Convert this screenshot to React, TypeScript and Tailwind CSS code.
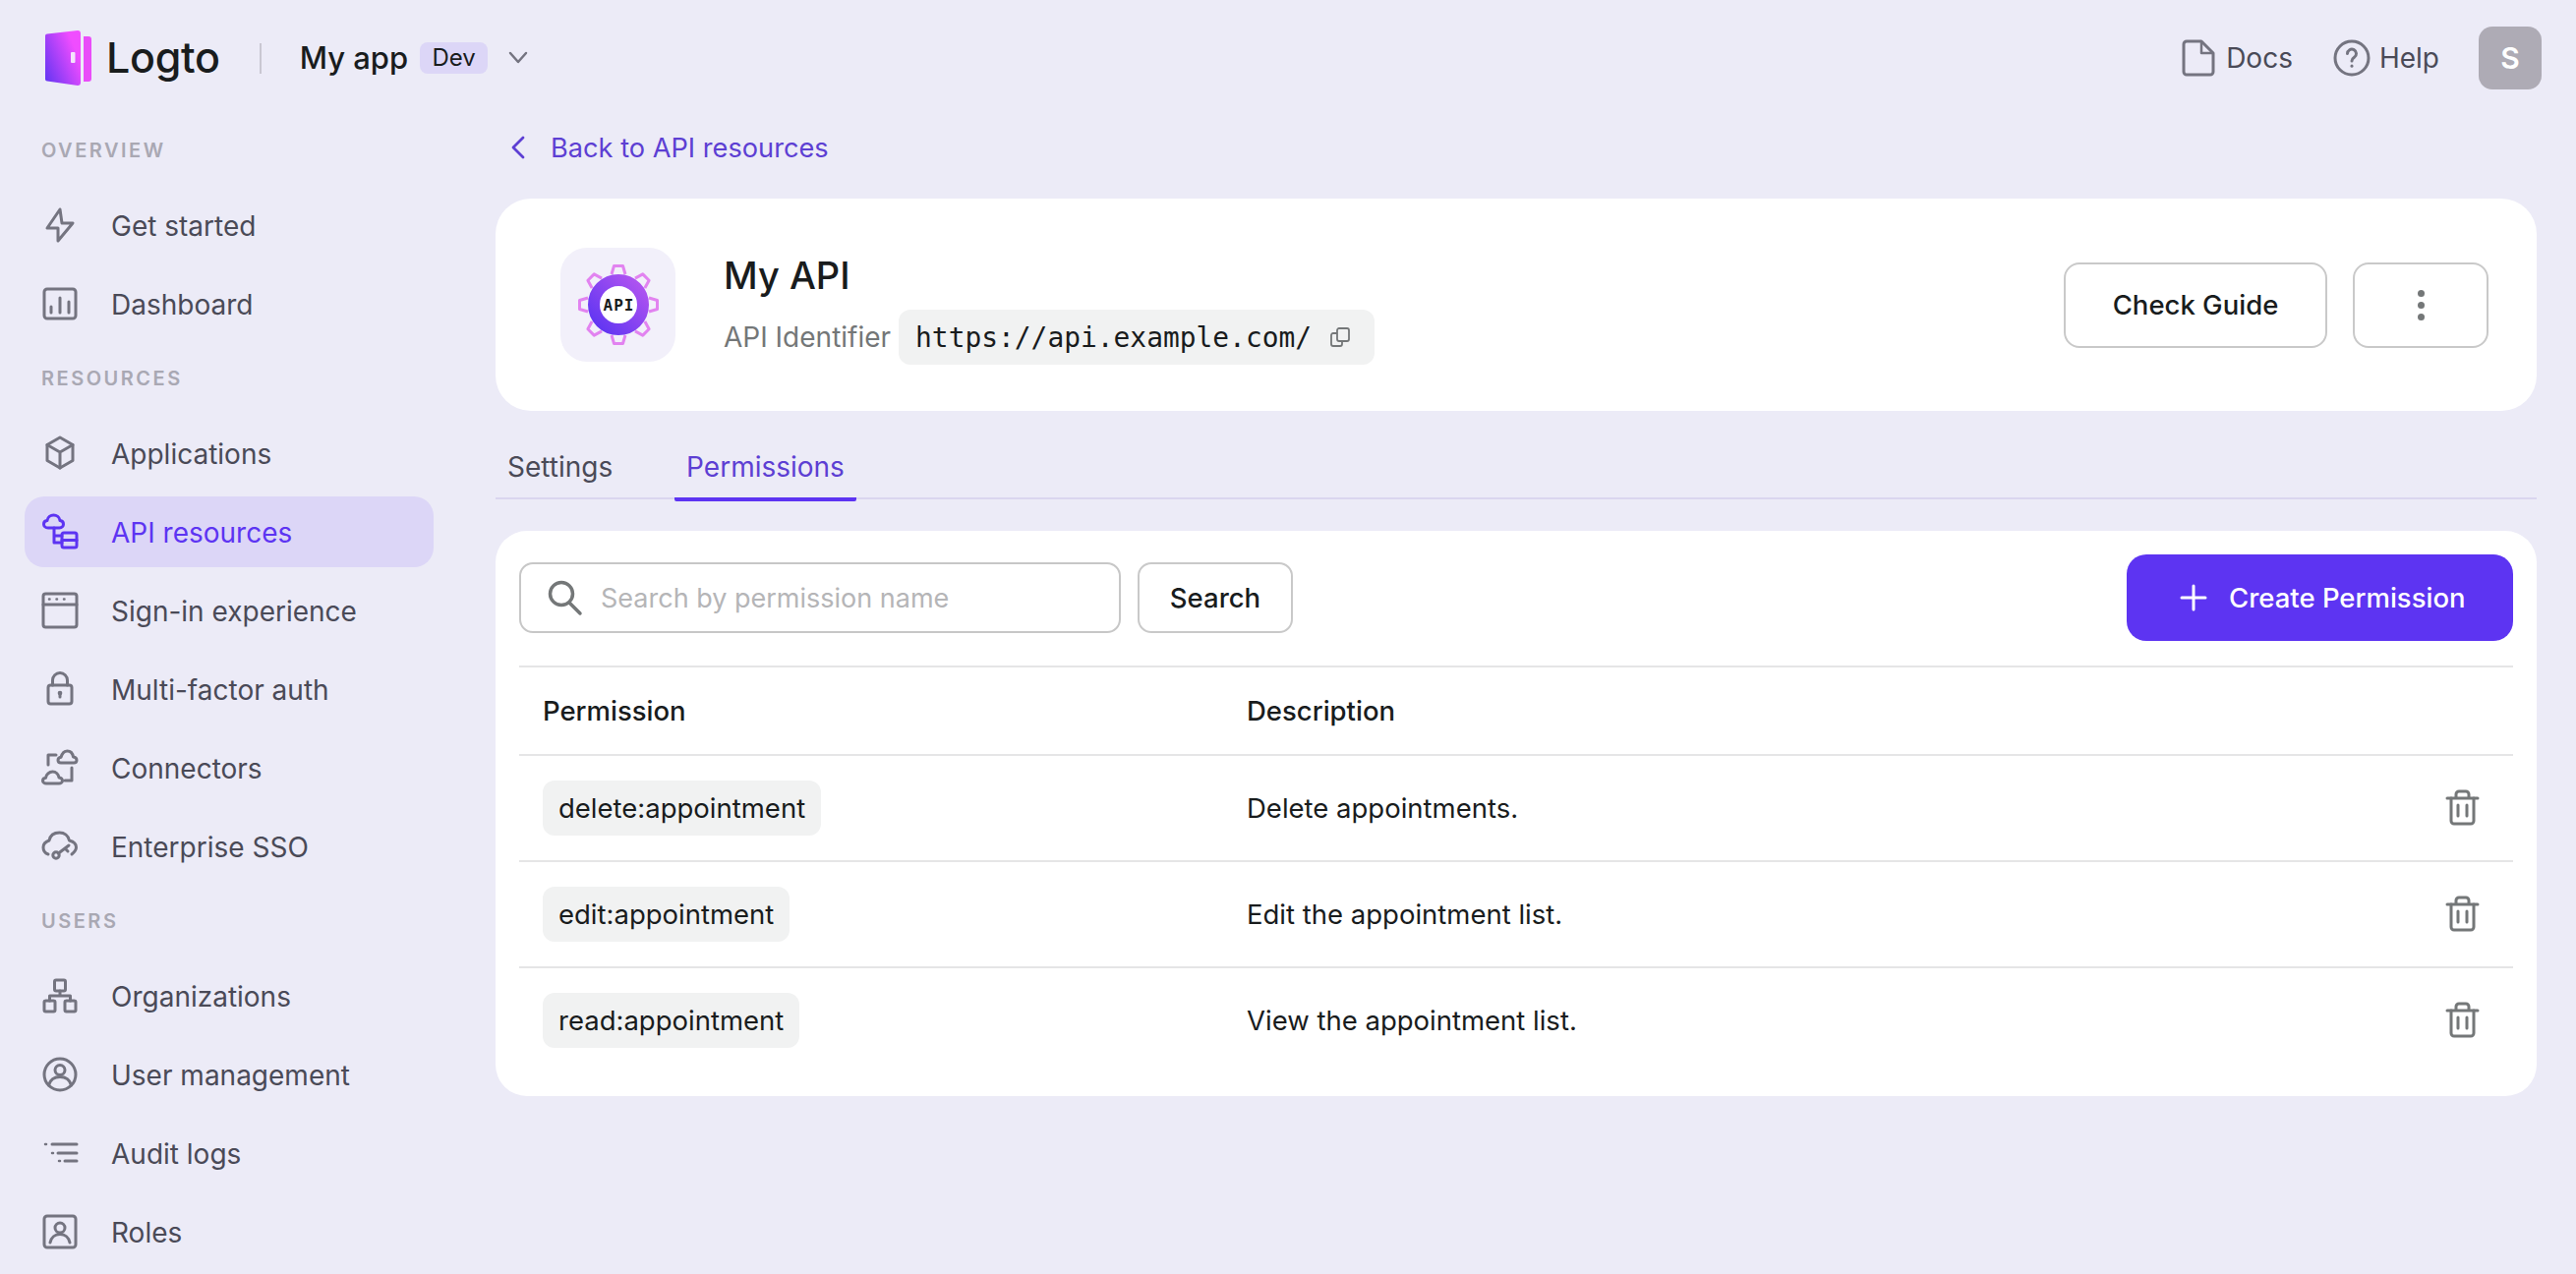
import React from "react";

const NavSvg = ({ children, active }: { children: React.ReactNode; active?: boolean }) => (
  <svg width="40" height="40" viewBox="0 0 40 40" fill="none" stroke={active ? "#5d34f2" : "#747480"} strokeWidth="3" strokeLinecap="round" strokeLinejoin="round" className="shrink-0">
    {children}
  </svg>
);

const icons: Record<string, React.ReactNode> = {
  bolt: <path d="M20 4 7 23h11l0 13 15-18H22Z" />,
  dash: <><rect x="4" y="5" width="32" height="30" rx="3" /><path d="M11 23v6M20 14v15M29 18v11" /></>,
  box: <><path d="M20 4 33 11.500V27.500L20 35 7 27.500V11.500Z" /><path d="M7 11.500 20 19 33 11.500M20 19V35" /></>,
  api: <><path d="M8 16c-3 0-4.500-2-4.500-3.800 0-2 1.500-3.500 3.500-3.700C7.500 5 10.500 3 13.500 3s6 2 6.500 5.500c2 .2 3.500 1.700 3.500 3.700 0 1.800-1.500 3.800-4 3.800Z" /><path d="M14 16v15h8M14 24h8" /><rect x="22" y="21" width="15" height="15" rx="2" /><path d="M22 28.500h15" /></>,
  signin: <><rect x="3" y="3" width="34" height="34" rx="2.500" /><path d="M3 14h34" /><path d="M9 8.500h.5M16.500 8.500h.5M24 8.500h.5" strokeWidth="2.500" /></>,
  lock: <><rect x="8" y="16" width="24" height="19" rx="2.500" /><path d="M12.500 16v-5a7.500 7.500 0 0 1 15 0v5" /><circle cx="20" cy="24" r="1.600" fill="#747480" strokeWidth="1.500" /><path d="M20 25v3" /></>,
  conn: <><path d="M21 15c-2 0-3-1.300-3-2.700s1-2.700 3-3C22 6 24 3 27.500 3s5.500 3 6 6c2.300.3 3.500 1.800 3.500 3.300S36 15 34 15Z" /><path d="M8 17V7h8" /><path d="M6 36c-2 0-3.500-1.300-3.500-2.800s1-2.800 3-3C6 27 9 24 12.500 24s6 3 6.500 6c2 .3 3.500 1.700 3.500 3.200S21 36 19 36Z" /><path d="M32 20v13h-7" /></>,
  sso: <><path d="M8 28c-3-1-5-4-5-7 0-4 3-6 6-7 1-5 5-8 10.500-8 5 0 9 3 10 8 4 1 7 3 7 7 0 3-2 5-4.500 7" /><circle cx="16" cy="29" r="3.200" /><path d="M18.500 27 29 19M25 22l3 3" /></>,
  org: <><rect x="14.500" y="4" width="11" height="11" rx="1.500" /><rect x="4" y="25" width="11" height="11" rx="1.500" /><rect x="25" y="25" width="11" height="11" rx="1.500" /><path d="M20 15v5M9.500 25v-5h21v5" /></>,
  user: <><circle cx="20" cy="20" r="16" /><circle cx="20" cy="15.500" r="5" /><path d="M8.500 31c1.500-5.500 5.500-8.500 11.500-8.500S30 25.500 31.500 31" /></>,
  logs: <><path d="M12 11h25M18 20h19M25 28h12" /><path d="M5 11h1M12 20h1M19 28h1" strokeWidth="2.500" /></>,
  roles: <><rect x="4" y="4" width="32" height="32" rx="3" /><circle cx="20" cy="16" r="5" /><path d="M10 31c1-5 5-8.500 10-8.500S29 26 30 31" /></>,
};

const sections = [
  { title: "OVERVIEW", items: [["bolt", "Get started"], ["dash", "Dashboard"]] },
  { title: "RESOURCES", items: [["box", "Applications"], ["api", "API resources"], ["signin", "Sign-in experience"], ["lock", "Multi-factor auth"], ["conn", "Connectors"], ["sso", "Enterprise SSO"]] },
  { title: "USERS", items: [["org", "Organizations"], ["user", "User management"], ["logs", "Audit logs"], ["roles", "Roles"]] },
];

const Logo = () => (
  <svg width="48" height="56" viewBox="0 0 48 56" className="shrink-0">
    <defs>
      <linearGradient id="door" x1="0" y1="1" x2="1" y2="0.350">
        <stop offset="0" stopColor="#5d34f2" />
        <stop offset="0.900" stopColor="#f04dff" />
      </linearGradient>
    </defs>
    <path d="M39 6h5a3 3 0 0 1 3 3v40a3 3 0 0 1-3 3h-5Z" fill="#e94df9" />
    <path d="M2 3.500 33 0a3 3 0 0 1 3 3v50a3 3 0 0 1-3 3L2 51.500a2 2 0 0 1-2-2V5.500a2 2 0 0 1 2-2Z" fill="url(#door)" />
    <rect x="26" y="22" width="4.500" height="11" rx="1" fill="#f4e3fb" />
  </svg>
);

const Tooth = ({ a }: { a: number }) => (
  <path d="M-7 -31 L-4.500 -39.500 H4.500 L7 -31" fill="none" stroke="#e283f0" strokeWidth="3" strokeLinejoin="round" transform={`rotate(${a})`} />
);

const ApiIcon = () => (
  <svg width="90" height="90" viewBox="-45 -45 90 90">
    <defs>
      <linearGradient id="ring" x1="0" y1="1" x2="1" y2="0">
        <stop offset="0" stopColor="#5d34f2" />
        <stop offset="1" stopColor="#b455f0" />
      </linearGradient>
    </defs>
    {[0, 45, 90, 135, 180, 225, 270, 315].map((a) => <Tooth key={a} a={a} />)}
    <circle cx="0" cy="0" r="25" fill="#fff" stroke="url(#ring)" strokeWidth="12" />
    <text x="0.500" y="5.800" textAnchor="middle" fontFamily="'DejaVu Sans Mono', monospace" fontWeight="700" fontSize="16" letterSpacing="1" fill="#191c1d">API</text>
  </svg>
);

const Trash = () => (
  <svg width="40" height="40" viewBox="0 0 40 40" fill="none" stroke="#747778" strokeWidth="3" strokeLinecap="round" strokeLinejoin="round">
    <path d="M5 10h31M14 10V6a3 3 0 0 1 3-3h7a3 3 0 0 1 3 3v4" />
    <path d="M9 10v23a3 3 0 0 0 3 3h17a3 3 0 0 0 3-3V10" />
    <path d="M16 17v11M25 17v11" />
  </svg>
);

const rows = [
  ["delete:appointment", "Delete appointments."],
  ["edit:appointment", "Edit the appointment list."],
  ["read:appointment", "View the appointment list."],
];

export default function App() {
  return (
    <div className="w-[2620px] h-[1296px] overflow-hidden bg-[#ecebf7] font-['Inter',sans-serif] text-[28px] text-[#191c1d]">
      <header className="h-[118px] flex items-center pl-[46px] pr-[35px]">
        <Logo />
        <span className="ml-[14px] text-[43px] font-medium tracking-[-0.3px] text-[#191c1d] leading-none pb-[2px]">Logto</span>
        <div className="ml-[40px] w-[2px] h-[31px] bg-[#c9c7d2]" />
        <span className="ml-[39px] text-[31px] font-medium text-[#191c1d]">My app</span>
        <span className="ml-[12px] h-[32px] w-[69px] rounded-[8px] bg-[#dcd6f7] flex items-center justify-center text-[24px] leading-none text-[#191c1d]">Dev</span>
        <svg width="24" height="16" viewBox="0 0 24 16" fill="none" stroke="#747480" strokeWidth="2.500" strokeLinecap="round" strokeLinejoin="round" className="ml-[19px]">
          <path d="M4 3 12 12 20 3" />
        </svg>
        <div className="ml-auto flex items-center">
          <svg width="40" height="40" viewBox="0 0 40 40" fill="none" stroke="#747480" strokeWidth="3" strokeLinejoin="round">
            <path d="M8 3h15l12 12v19a3 3 0 0 1-3 3H8a3 3 0 0 1-3-3V6a3 3 0 0 1 3-3Z" />
            <path d="M23 3v12h12" strokeWidth="2.500" />
          </svg>
          <span className="ml-[8px] text-[#4a4a57]">Docs</span>
          <svg width="40" height="40" viewBox="0 0 40 40" fill="none" stroke="#747480" strokeWidth="3" strokeLinecap="round" className="ml-[40px]">
            <circle cx="20" cy="20" r="17" />
            <path d="M15.500 15.500a4.500 4.500 0 1 1 7 3.800c-1.500 1-2.500 1.800-2.500 3.700" />
            <path d="M20 28v.2" />
          </svg>
          <span className="ml-[8px] text-[#4a4a57]">Help</span>
          <div className="ml-[40px] w-[64px] h-[64px] rounded-[14px] bg-[#aeabb5] flex items-center justify-center text-[30px] font-semibold text-white">S</div>
        </div>
      </header>

      <div className="flex">
        <aside className="w-[504px] shrink-0 pl-[25px] pt-[23px]">
          {sections.map((s, i) => (
            <div key={s.title} className={i === 0 ? "" : "mt-[28px]"}>
              <div className="pl-[17px] h-[24px] leading-[24px] text-[20px] font-semibold tracking-[2.5px] text-[#a9a8b3] mb-[28px]">{s.title}</div>
              <div className="w-[416px] flex flex-col gap-[8px]">
                {s.items.map(([ic, label]) => {
                  const active = label === "API resources";
                  return (
                    <div key={label} className={active ? "h-[72px] rounded-[20px] bg-[#dcd6f7] flex items-center pl-[16px] text-[#5d34f2]" : "h-[72px] flex items-center pl-[16px] text-[#4a4a57]"}>
                      <NavSvg active={active}>{icons[ic]}</NavSvg>
                      <span className="ml-[32px] pt-[2px]">{label}</span>
                    </div>
                  );
                })}
              </div>
            </div>
          ))}
        </aside>

        <main className="flex-1 pr-[40px]">
          <div className="h-[84px] flex items-start text-[#5d3fd3]">
            <div className="h-[64px] flex items-center pl-[13px]">
              <svg width="24" height="24" viewBox="0 0 24 24" fill="none" stroke="#5d3fd3" strokeWidth="2.800" strokeLinecap="round" strokeLinejoin="round">
                <path d="M15 2 5 12l10 10" />
              </svg>
              <span className="ml-[19px] pt-[2px] text-[27.2px]">Back to API resources</span>
            </div>
          </div>

          <section className="h-[216px] rounded-[36px] bg-white flex items-center pl-[66px] pr-[49px]">
            <div className="w-[117px] h-[116px] rounded-[27px] bg-[#f2f0fa] flex items-center justify-center">
              <ApiIcon />
            </div>
            <div className="ml-[49px] mt-[6px]">
              <div className="text-[38px] font-medium leading-[48px] text-[#191c1d] mb-[11px]">My API</div>
              <div className="flex items-center">
                <span className="text-[#747778]">API Identifier</span>
                <div className="ml-[8px] h-[56px] w-[484px] rounded-[12px] bg-[#f1f2f2] flex items-center pl-[17px]">
                  <span className="font-['DejaVu_Sans_Mono',monospace] text-[27.9px] pt-[2px] text-[#191c1d]">https://api.example.com/</span>
                  <svg width="24" height="24" viewBox="0 0 24 24" fill="none" stroke="#747778" strokeWidth="1.800" strokeLinejoin="round" className="ml-[17px]">
                    <rect x="9" y="3" width="12" height="13" rx="2" />
                    <path d="M9 8H5a2 2 0 0 0-2 2v9a2 2 0 0 0 2 2h7a2 2 0 0 0 2-2v-3" />
                  </svg>
                </div>
              </div>
            </div>
            <button className="ml-auto w-[268px] h-[87px] rounded-[16px] border-2 border-[#c9c9c9] bg-white font-medium pt-[2px] text-[27.5px] text-[#191c1d]">Check Guide</button>
            <button className="ml-[26px] w-[138px] h-[87px] rounded-[16px] border-2 border-[#c9c9c9] bg-white flex flex-col items-center justify-center gap-[5px]">
              <span className="w-[7px] h-[7px] rounded-full bg-[#747778]" />
              <span className="w-[7px] h-[7px] rounded-full bg-[#747778]" />
              <span className="w-[7px] h-[7px] rounded-full bg-[#747778]" />
            </button>
          </section>

          <nav className="mt-[26px] h-[64px] border-b-2 border-[#dad6ef] flex items-stretch">
            <div className="w-[182px] pt-[14px] pl-[12px] text-[#4a4a57] leading-[34px]">Settings</div>
            <div className="w-[185px] pt-[14px] text-center text-[#5d3fd3] leading-[34px] border-b-4 border-[#5d34f2] h-[66px] rounded-b-[2px]">Permissions</div>
          </nav>

          <section className="mt-[32px] rounded-[32px] bg-white h-[575px] px-[24px] text-[27.5px]">
            <div className="h-[137px] flex items-center pb-[2px]">
              <div className="w-[612px] h-[72px] rounded-[14px] border-2 border-[#c7c7c7] flex items-center pl-[24px]">
                <svg width="40" height="40" viewBox="0 0 40 40" fill="none" stroke="#747778" strokeWidth="3.500" strokeLinecap="round">
                  <circle cx="17" cy="16" r="11.500" />
                  <path d="M25 25l11 11" />
                </svg>
                <span className="ml-[17px] pt-[3px] text-[27px] text-[#b5b5b7]">Search by permission name</span>
              </div>
              <button className="ml-[17px] w-[158px] h-[72px] rounded-[14px] border-2 border-[#c9c9c9] bg-white font-medium pt-[2px] text-[27.5px] text-[#191c1d]">Search</button>
              <button className="ml-auto w-[393px] h-[88px] rounded-[20px] bg-[#5d34f2] flex items-center pl-[53px] text-white font-medium">
                <svg width="30" height="30" viewBox="0 0 30 30" fill="none" stroke="#fff" strokeWidth="3" strokeLinecap="round">
                  <path d="M15 3v24M3 15h24" />
                </svg>
                <span className="ml-[21px] pt-[2px]">Create Permission</span>
              </button>
            </div>

            <div className="grid grid-cols-[740px_1fr] h-[90px] items-center border-t-2 border-[#e5e5e6]">
              <div className="pl-[24px] pt-[2px] font-medium">Permission</div>
              <div className="pt-[2px] font-medium">Description</div>
            </div>
            {rows.map(([p, d]) => (
              <div key={p} className="grid grid-cols-[740px_1fr_auto] h-[108px] items-center border-t-2 border-[#e5e5e6]">
                <div className="pl-[24px]">
                  <span className="inline-flex h-[56px] items-center rounded-[12px] bg-[#f1f2f2] px-[16px] pt-[2px]">{p}</span>
                </div>
                <div className="pt-[2px]">{d}</div>
                <div className="pr-[32px] flex"><Trash /></div>
              </div>
            ))}
          </section>
        </main>
      </div>
    </div>
  );
}
